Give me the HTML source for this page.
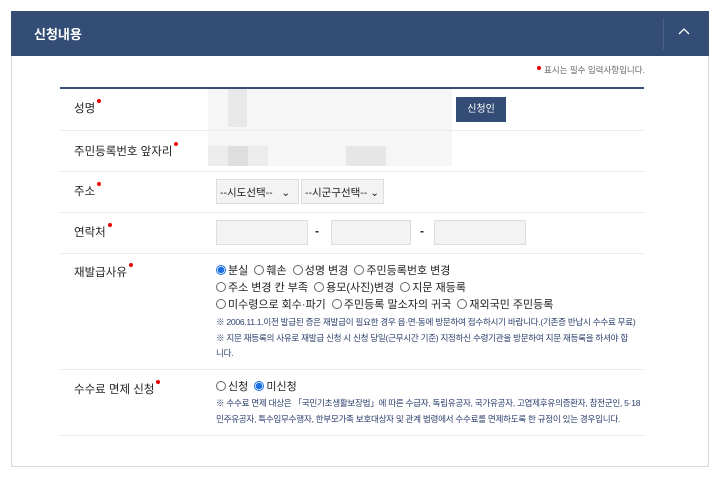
<!DOCTYPE html>
<html><head><meta charset="utf-8"><style>
*{margin:0;padding:0;box-sizing:border-box}
body{width:720px;height:480px;background:#fff;font-family:"Liberation Sans","Noto Sans CJK KR",sans-serif;position:relative;overflow:hidden;color:#222}
.a{position:absolute}
.box{left:11px;top:11px;width:698px;height:456px;border:1px solid #d8d8d8}
.hd{left:11px;top:11px;width:698px;height:45px;background:#334d76}
.lbl{font-size:11.5px;color:#222;left:74px}
.dot{display:inline-block;width:4px;height:4px;border-radius:2px;background:#e00;position:relative;top:-9px;left:2px}
.line{left:60px;width:584px;height:1px;background:#ececec}
.sel{height:25px;border:1px solid #ddd;background:#f3f3f3;font-size:10.5px;padding:5px 3px;color:#222}
.inp{height:25px;border:1px solid #ddd;background:#f3f3f3;width:92px;top:220px}
.rad{font-size:11px;color:#222;white-space:nowrap}
.r{display:inline-block;width:10px;height:10px;border:1px solid #666;border-radius:50%;vertical-align:-1px;margin-right:2px;background:#fff}
.on{border-color:#1a6fe0;background:radial-gradient(circle,#1a6fe0 0 3px,#fff 3.5px)}
.note{font-size:8.6px;color:#2c3f6d;line-height:15.5px;left:216px;white-space:nowrap;letter-spacing:-.3px}
</style></head><body>
<div class="a box"></div>
<div class="a hd"></div>
<div class="a" style="left:34px;top:24px;color:#fff;font-size:13px;font-weight:bold">신청내용</div>
<div class="a" style="left:663px;top:18px;width:1px;height:32px;background:#4a6189"></div>
<svg class="a" style="left:678px;top:27px" width="12" height="8"><path d="M1 7L6 2L11 7" stroke="#fff" stroke-width="1.3" fill="none"/></svg>
<div class="a" style="left:537px;top:64px;font-size:8.5px;color:#666"><span class="dot" style="top:-3px;left:0;margin-right:3px"></span>표시는 필수 입력사항입니다.</div>
<div class="a" style="left:60px;top:87px;width:584px;height:2px;background:#334d76"></div>

<div class="a" style="left:208px;top:89px;width:244px;height:77px;background:#f6f6f6"></div>
<div class="a" style="left:228px;top:89px;width:19px;height:38px;background:#e8e8e8"></div>
<div class="a" style="left:208px;top:146px;width:60px;height:20px;background:#ececec"></div>
<div class="a" style="left:228px;top:146px;width:20px;height:20px;background:#dedede"></div>
<div class="a" style="left:346px;top:146px;width:40px;height:20px;background:#e6e6e6"></div>
<div class="a" style="left:456px;top:97px;width:50px;height:25px;background:#334d76;color:#fff;font-size:10px;text-align:center;line-height:25px">신청인</div>

<div class="a lbl" style="top:100px">성명<span class="dot"></span></div>
<div class="a line" style="top:130px"></div>
<div class="a lbl" style="top:143px">주민등록번호 앞자리<span class="dot"></span></div>
<div class="a line" style="top:171px"></div>
<div class="a lbl" style="top:183px">주소<span class="dot"></span></div>
<div class="a sel" style="left:216px;top:179px;width:83px">--시도선택-- &nbsp;&nbsp;⌄</div>
<div class="a sel" style="left:301px;top:179px;width:83px">--시군구선택-- ⌄</div>
<div class="a line" style="top:212px"></div>
<div class="a lbl" style="top:224px">연락처<span class="dot"></span></div>
<div class="a inp" style="left:216px"></div>
<div class="a" style="left:315px;top:224px;font-size:12px;font-weight:bold">-</div>
<div class="a inp" style="left:331px;width:80px"></div>
<div class="a" style="left:420px;top:224px;font-size:12px;font-weight:bold">-</div>
<div class="a inp" style="left:434px"></div>
<div class="a line" style="top:253px"></div>
<div class="a lbl" style="top:264px">재발급사유<span class="dot"></span></div>
<div class="a rad" style="left:216px;top:262px"><span class="r on"></span>분실 &nbsp;<span class="r"></span>훼손 &nbsp;<span class="r"></span>성명 변경 &nbsp;<span class="r"></span>주민등록번호 변경</div>
<div class="a rad" style="left:216px;top:279px"><span class="r"></span>주소 변경 칸 부족 &nbsp;<span class="r"></span>용모(사진)변경 &nbsp;<span class="r"></span>지문 재등록</div>
<div class="a rad" style="left:216px;top:296px"><span class="r"></span>미수령으로 회수·파기 &nbsp;<span class="r"></span>주민등록 말소자의 귀국 &nbsp;<span class="r"></span>재외국민 주민등록</div>
<div class="a note" style="top:315px">※ 2006.11.1.이전 발급된 증은 재발급이 필요한 경우 읍·면·동에 방문하여 접수하시기 바랍니다.(기존증 반납시 수수료 무료)<br>※ 지문 재등록의 사유로 재발급 신청 시 신청 당일(근무시간 기준) 지정하신 수령기관을 방문하여 지문 재등록을 하셔야 합<br>니다.</div>
<div class="a line" style="top:369px"></div>
<div class="a lbl" style="top:381px">수수료 면제 신청<span class="dot"></span></div>
<div class="a rad" style="left:216px;top:378px"><span class="r"></span>신청 &nbsp;<span class="r on"></span>미신청</div>
<div class="a note" style="top:396px">※ 수수료 면제 대상은 「국민기초생활보장법」에 따른 수급자, 독립유공자, 국가유공자, 고엽제후유의증환자, 참전군인, 5·18<br>민주유공자, 특수임무수행자, 한부모가족 보호대상자 및 관계 법령에서 수수료를 면제하도록 한 규정이 있는 경우입니다.</div>
<div class="a line" style="top:435px"></div>
</body></html>
